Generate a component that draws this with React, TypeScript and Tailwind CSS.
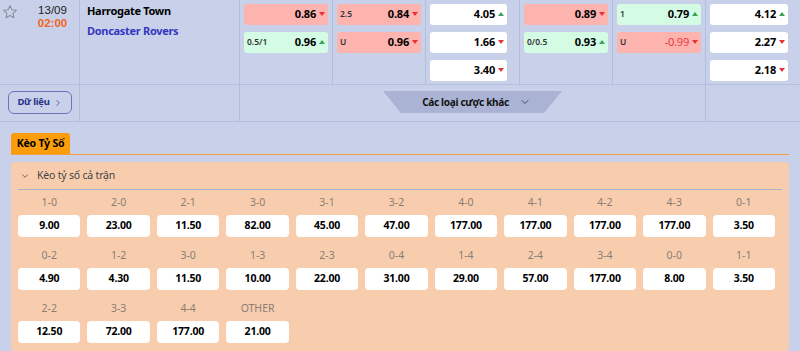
import { ChevronDown, ChevronRight } from "lucide-react";

type Odd = { val: string; dir: "up" | "down"; tone: "red" | "green" | "white"; hdp?: string; neg?: boolean };

const Arrow = ({ dir }: { dir: "up" | "down" }) =>
  dir === "up" ? (
    <span className="inline-block w-0 h-0 border-l-[3px] border-r-[3px] border-b-[4px] border-l-transparent border-r-transparent border-b-[#3aa257] ml-[3px] mb-[2px]" />
  ) : (
    <span className="inline-block w-0 h-0 border-l-[3px] border-r-[3px] border-t-[4px] border-l-transparent border-r-transparent border-t-[#e8323a] ml-[3px] mb-[1px]" />
  );

function OddBox({ o }: { o: Odd }) {
  const bg = o.tone === "red" ? "bg-[#fdb3ae]" : o.tone === "green" ? "bg-[#d4fbe3]" : "bg-white";
  return (
    <div className={`h-[21px] rounded-[3px] ${bg} flex items-center pl-[3px] pr-[3px]`}>
      <span className="text-[8.5px] font-semibold text-[#333] flex-1">{o.hdp}</span>
      <span className={`text-[11px] tracking-[-0.2px] ${o.neg ? "text-[#ec3a3f] font-normal" : "text-black font-bold"}`}>{o.val}</span>
      <Arrow dir={o.dir} />
    </div>
  );
}

function OddCol({ items, wide }: { items: Odd[]; wide?: boolean }) {
  return (
    <div className={`border-l border-[#b4bedb] pt-[4px] pl-[4px] ${wide ? "pr-[12px]" : "pr-[4px]"} flex flex-col gap-[7px]`}>
      {items.map((o, i) => (
        <OddBox key={i} o={o} />
      ))}
    </div>
  );
}

const row1 = ["1-0", "2-0", "2-1", "3-0", "3-1", "3-2", "4-0", "4-1", "4-2", "4-3", "0-1"];
const val1 = ["9.00", "23.00", "11.50", "82.00", "45.00", "47.00", "177.00", "177.00", "177.00", "177.00", "3.50"];
const row2 = ["0-2", "1-2", "3-0", "1-3", "2-3", "0-4", "1-4", "2-4", "3-4", "0-0", "1-1"];
const val2 = ["4.90", "4.30", "11.50", "10.00", "22.00", "31.00", "29.00", "57.00", "177.00", "8.00", "3.50"];
const row3 = ["2-2", "3-3", "4-4", "OTHER"];
const val3 = ["12.50", "72.00", "177.00", "21.00"];

export default function App() {
  const scores = [
    ...row1.map((l, i) => ({ l, v: val1[i] })),
    ...row2.map((l, i) => ({ l, v: val2[i] })),
    ...row3.map((l, i) => ({ l, v: val3[i] })),
  ];
  return (
    <div className="w-[800px] h-[351px] overflow-hidden bg-[#c8d1e9] font-['Noto_Sans',sans-serif] text-black">
      {/* match row */}
      <div className="grid grid-cols-[79px_160px_93px_93px_94px_93px_93px_95px] h-[85px] border-b border-[#b4bedb]">
        <div className="flex pt-[4px] pl-[2px]">
          <svg width="16" height="16" viewBox="0 0 24 24" fill="none" stroke="#8a8f9c" strokeWidth="1.6" strokeLinejoin="round" className="shrink-0">
            <path d="M12 2.5l2.9 6.1 6.6.8-4.9 4.6 1.3 6.6L12 17.3l-5.9 3.3 1.3-6.6-4.9-4.6 6.6-.8z" />
          </svg>
          <div className="w-[61px] flex flex-col items-center pl-[8px] font-['Liberation_Sans',sans-serif]">
            <span className="text-[11.5px] leading-[13px] text-[#222]">13/09</span>
            <span className="text-[11.5px] leading-[13px] font-bold text-[#f2651b]">02:00</span>
          </div>
        </div>
        <div className="border-l border-[#b4bedb] pl-[7px] pt-[3px] flex flex-col">
          <span className="text-[11px] tracking-[-0.3px] font-bold leading-[16px]">Harrogate Town</span>
          <span className="text-[11px] tracking-[-0.3px] font-bold leading-[16px] mt-[4px] text-[#3535c0]">Doncaster Rovers</span>
        </div>
        <OddCol items={[{ val: "0.86", dir: "down", tone: "red" }, { val: "0.96", dir: "up", tone: "green", hdp: "0.5/1" }]} />
        <OddCol items={[{ val: "0.84", dir: "down", tone: "red", hdp: "2.5" }, { val: "0.96", dir: "down", tone: "red", hdp: "U" }]} />
        <OddCol wide items={[{ val: "4.05", dir: "up", tone: "white" }, { val: "1.66", dir: "down", tone: "white" }, { val: "3.40", dir: "down", tone: "white" }]} />
        <OddCol items={[{ val: "0.89", dir: "down", tone: "red" }, { val: "0.93", dir: "up", tone: "green", hdp: "0/0.5" }]} />
        <OddCol items={[{ val: "0.79", dir: "up", tone: "green", hdp: "1" }, { val: "-0.99", dir: "down", tone: "red", hdp: "U", neg: true }]} />
        <OddCol wide items={[{ val: "4.12", dir: "up", tone: "white" }, { val: "2.27", dir: "down", tone: "white" }, { val: "2.18", dir: "down", tone: "white" }]} />
      </div>

      {/* second row */}
      <div className="grid grid-cols-[79px_160px_466px_95px] h-[37px] border-b border-[#b4bedb]">
        <div className="pl-[8px] pt-[6px]">
          <button className="w-[64px] h-[23px] border-[1.5px] border-[#6a74bb] rounded-[6px] flex items-center justify-center gap-[3px] text-[9.5px] tracking-[-0.3px] font-bold text-[#27318c]">
            Dữ liệu
            <ChevronRight size={10} strokeWidth={1.6} />
          </button>
        </div>
        <div className="border-l border-[#b4bedb]" />
        <div className="border-l border-[#b4bedb] flex justify-center pt-[6px]">
          <div className="w-[179px] h-[22px] bg-[#aab3d3] [clip-path:polygon(0_0,100%_0,calc(100%-18px)_100%,18px_100%)] flex items-center justify-center gap-[10px] pl-[8px] text-[10px] tracking-[-0.3px] font-bold text-[#111]">
            Các loại cược khác
            <ChevronDown size={12} strokeWidth={1.6} className="text-[#333]" />
          </div>
        </div>
        <div className="border-l border-[#b4bedb]" />
      </div>

      {/* score tabs */}
      <div className="px-[11px] pt-[11px]">
        <div className="flex border-b border-[#f0a13c]">
          <div className="w-[59px] h-[21px] bg-[#fb9d0b] rounded-t-[3px] flex items-center justify-center text-[10.5px] tracking-[-0.2px] font-bold">
            Kèo Tỷ Số
          </div>
        </div>
        <div className="mt-[7px] bg-[#f8cdae] rounded-[4px] px-[7px] pb-[8px]">
          <div className="h-[28px] flex items-center gap-[7px] pl-[2px] border-b border-[#aab2cc]">
            <ChevronDown size={10} strokeWidth={1.8} className="text-[#444]" />
            <span className="text-[10.5px] tracking-[-0.2px] text-[#444]">Kèo tỷ số cả trận</span>
          </div>
          <div className="grid grid-cols-11 gap-x-[7px] gap-y-[11px] pt-[5px] pr-[7px]">
            {scores.map((s, i) => (
              <div key={i} className="flex flex-col items-center">
                <span className="h-[14px] leading-[14px] text-[10.5px] text-[#8a7d75]">{s.l}</span>
                <div className="mt-[6px] w-full h-[22px] bg-white rounded-[4px] flex items-center justify-center text-[10.5px] tracking-[-0.2px] font-bold">
                  {s.v}
                </div>
              </div>
            ))}
          </div>
        </div>
      </div>
    </div>
  );
}
